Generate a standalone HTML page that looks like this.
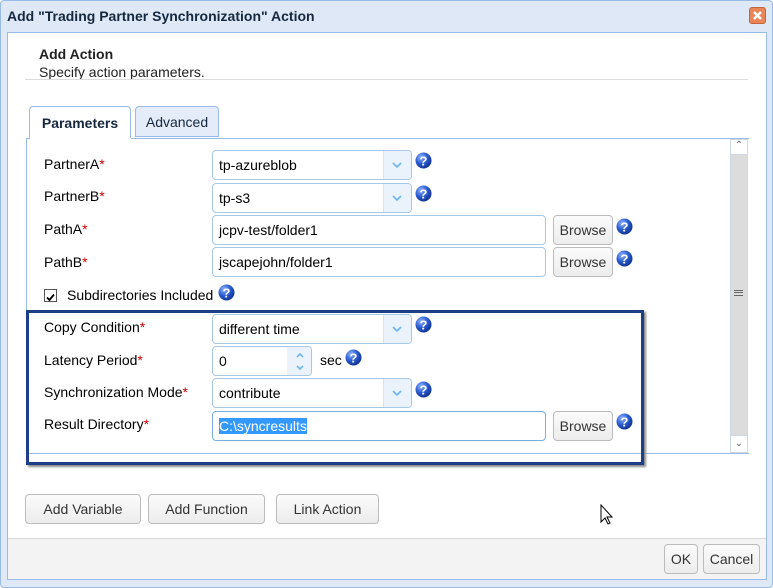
<!DOCTYPE html>
<html><head><meta charset="utf-8"><style>
*{box-sizing:border-box;margin:0;padding:0}
body{width:773px;height:588px;background:#fff;font-family:"Liberation Sans",sans-serif;font-size:14px;color:#000;position:relative;overflow:hidden}
.a{position:absolute}
.frame{left:0;top:0;width:773px;height:588px;background:#dfe8f6;border:1px solid #99bbe8;border-radius:4px}
.inner{left:7px;top:32px;width:760px;height:548px;border:1px solid #99bbe8;background:#fff}
.foot{left:8px;top:538px;width:758px;height:41px;background:#f3f3f3;border-top:1px solid #d8d8d8}
.title{left:7px;top:8px;font-weight:bold;font-size:14px;color:#15283f}
.lbl{font-size:14px;color:#000}
.req{color:#c00}
.sel,.inp{border:1px solid #a8c8e8;border-radius:4px;background:#fff;height:30px;padding:0 6px;line-height:28px;font-size:14px}
.sel .arr{position:absolute;right:0;top:0;width:28px;height:28px;background:#eaf2fb;border-left:1px solid #d6e4f2;border-radius:0 3px 3px 0}
.btn{border:1px solid #bcbcbc;border-radius:4px;background:linear-gradient(#fbfbfb,#ececec);font-size:14px;color:#333;text-align:center;line-height:28px;height:30px}
.help{width:17px;height:17px}
</style></head><body>
<div class="a frame"></div>
<div class="a title">Add "Trading Partner Synchronization" Action</div>
<div class="a" style="left:749px;top:7px;width:17px;height:17px;background:#e8865a;border:1px solid #c3643c;border-radius:3px">
<svg width="15" height="15" viewBox="0 0 15 15"><path d="M4 4L11 11M11 4L4 11" stroke="#fff" stroke-width="2.5"/></svg></div>
<div class="a inner"></div>
<div class="a foot"></div>
<div class="a" style="left:39px;top:46px;font-weight:bold;color:#222">Add Action</div>
<div class="a" style="left:39px;top:64px;color:#222">Specify action parameters.</div>
<div class="a" style="left:25px;top:79px;width:723px;height:1px;background:#dcdcdc"></div>

<!-- tabs -->
<div class="a" style="left:29px;top:106px;width:102px;height:33px;border:1px solid #99bbe8;border-bottom:none;border-radius:4px 4px 0 0;background:#fff;font-weight:bold;color:#15283f;text-align:center;line-height:32px">Parameters</div>
<div class="a" style="left:135px;top:106px;width:84px;height:31px;border:1px solid #99bbe8;border-radius:4px 4px 0 0;background:#e3ecf8;color:#15283f;text-align:center;line-height:30px">Advanced</div>
<div class="a" style="left:26px;top:138px;width:723px;height:316px;border:1px solid #99bbe8;border-right:none"></div>
<div class="a" style="left:26px;top:138px;width:104px;height:2px;background:#fff;left:30px"></div>
<div class="a" style="left:131px;top:138px;width:618px;height:1px;background:#99bbe8"></div>
<!-- scrollbar -->
<div class="a" style="left:730px;top:139px;width:18px;height:314px;background:#dcdcdc;border:1px solid #cfd9e6"></div>
<div class="a" style="left:730px;top:139px;width:18px;height:16px;background:#fff;border:1px solid #cfd9e6;font-size:10px;text-align:center;color:#666">&#8963;</div>
<div class="a" style="left:730px;top:435px;width:18px;height:18px;background:#fff;border:1px solid #cfd9e6;font-size:10px;text-align:center;color:#666;line-height:16px">&#8964;</div>
<div class="a" style="left:734px;top:290px;width:9px;height:6px;border-top:1px solid #666;border-bottom:1px solid #666"></div>
<div class="a" style="left:734px;top:292px;width:9px;height:1px;background:#666"></div>

<!-- rows -->
<div class="a lbl" style="left:44px;top:156px">PartnerA<span class="req">*</span></div>
<div class="a sel" style="left:212px;top:150px;width:200px">tp-azureblob<div class="arr"></div></div>
<div class="a lbl" style="left:44px;top:188px">PartnerB<span class="req">*</span></div>
<div class="a sel" style="left:212px;top:183px;width:200px">tp-s3<div class="arr"></div></div>
<div class="a lbl" style="left:44px;top:221px">PathA<span class="req">*</span></div>
<div class="a inp" style="left:212px;top:215px;width:334px">jcpv-test/folder1</div>
<div class="a btn" style="left:553px;top:215px;width:60px">Browse</div>
<div class="a lbl" style="left:44px;top:254px">PathB<span class="req">*</span></div>
<div class="a inp" style="left:212px;top:247px;width:334px">jscapejohn/folder1</div>
<div class="a btn" style="left:553px;top:247px;width:60px">Browse</div>
<div class="a" style="left:44px;top:289px;width:13px;height:13px;border:1px solid #555;background:#fff"><svg width="11" height="11" viewBox="0 0 11 11"><path d="M2 5.5L4.5 8L9 2.5" stroke="#000" stroke-width="1.8" fill="none"/></svg></div>
<div class="a lbl" style="left:67px;top:287px">Subdirectories Included</div>

<div class="a lbl" style="left:44px;top:319px">Copy Condition<span class="req">*</span></div>
<div class="a sel" style="left:212px;top:314px;width:200px">different time<div class="arr"></div></div>
<div class="a lbl" style="left:44px;top:352px">Latency Period<span class="req">*</span></div>
<div class="a inp" style="left:212px;top:346px;width:100px">0<div class="a" style="right:0;top:0;width:24px;height:28px;background:#eaf2fb;border-radius:0 3px 3px 0"></div></div>
<div class="a lbl" style="left:320px;top:352px">sec</div>
<div class="a lbl" style="left:44px;top:384px">Synchronization Mode<span class="req">*</span></div>
<div class="a sel" style="left:212px;top:378px;width:200px">contribute<div class="arr"></div></div>
<div class="a lbl" style="left:44px;top:416px">Result Directory<span class="req">*</span></div>
<div class="a inp" style="left:212px;top:411px;width:334px;border-color:#7aaee0"><span style="background:#3399ff;color:#fff;line-height:18px">C:\syncresults</span></div>
<div class="a btn" style="left:553px;top:411px;width:60px">Browse</div>

<div class="a" style="left:26px;top:310px;width:618px;height:155px;border:3px solid #1c3f87;box-shadow:2px 2px 2px #888"></div>

<!-- help icons -->
<svg class="a" style="left:0;top:0" width="773" height="588">
<defs><radialGradient id="g" cx="0.35" cy="0.3" r="0.8"><stop offset="0" stop-color="#8fb4ff"/><stop offset="0.5" stop-color="#2a5bd0"/><stop offset="1" stop-color="#0b2a85"/></radialGradient>
<g id="h"><circle cx="8.5" cy="8.5" r="8" fill="url(#g)"/><text x="8.5" y="13.5" font-family="Liberation Sans" font-weight="bold" font-size="13" fill="#fff" text-anchor="middle">?</text></g></defs>
<use href="#h" x="415" y="152"/><use href="#h" x="415" y="185"/>
<use href="#h" x="616" y="218"/><use href="#h" x="616" y="250"/>
<use href="#h" x="218" y="284"/><use href="#h" x="415" y="316"/>
<use href="#h" x="345" y="349"/><use href="#h" x="415" y="381"/>
<use href="#h" x="616" y="413"/>
<g stroke="#6cb6ee" stroke-width="1.6" fill="none">
<path d="M393 163l4 4 4-4"/><path d="M393 196l4 4 4-4"/><path d="M393 327l4 4 4-4"/><path d="M393 391l4 4 4-4"/>
<path d="M297 357l3-3 3 3"/><path d="M297 366l3 3 3-3"/>
</g>
<path d="M601 505v17l4-4 3 6 2-1-3-6h5z" fill="#fff" stroke="#000" stroke-width="1"/>
</svg>

<div class="a btn" style="left:25px;top:494px;width:116px">Add Variable</div>
<div class="a btn" style="left:148px;top:494px;width:117px">Add Function</div>
<div class="a btn" style="left:276px;top:494px;width:103px">Link Action</div>
<div class="a btn" style="left:664px;top:544px;width:34px">OK</div>
<div class="a btn" style="left:703px;top:544px;width:57px">Cancel</div>
</body></html>
